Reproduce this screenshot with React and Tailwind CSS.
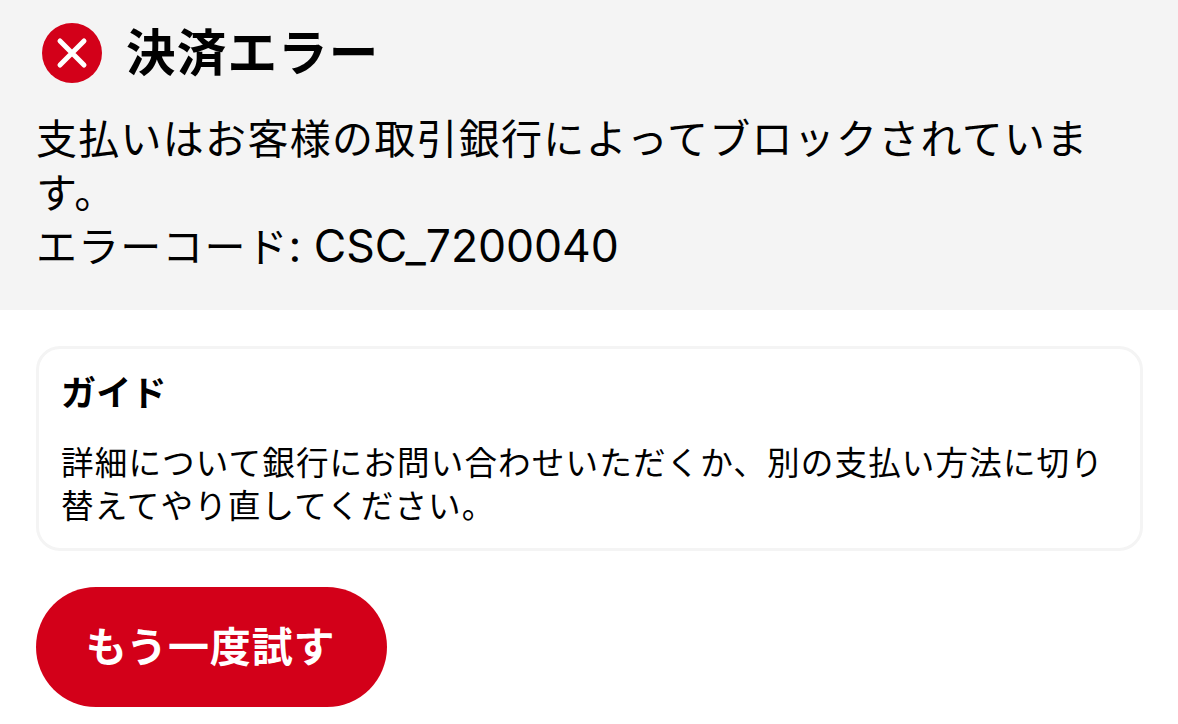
import React from "react";

function ErrorIcon() {
  return (
    <svg viewBox="0 0 60 60" className="mt-[23px] size-[60px] flex-none" aria-hidden="true">
      <circle cx="30" cy="30" r="30" fill="#d30019" />
      <path d="M18 18 42 42M42 18 18 42" stroke="#fff" strokeWidth="5" strokeLinecap="round" />
    </svg>
  );
}

export default function App() {
  return (
    <main
      lang="ja"
      className="h-[724px] overflow-hidden bg-white font-[Inter,'Noto_Sans_CJK_JP',sans-serif] text-black"
    >
      <section className="h-[310px] bg-[#f4f4f4] pl-[36px]">
        <header className="flex h-[112px] items-start gap-[24px] pl-[6px]">
          <ErrorIcon />
          <h1 className="mt-[19px] text-[49.5px] leading-[69px] font-bold tracking-[1.2px] whitespace-nowrap">
            決済エラー
          </h1>
        </header>
        <p className="text-[41px] leading-[54px] tracking-[1.28px] whitespace-nowrap">
          支払いはお客様の取引銀行によってブロックされていま
          <br />
          す。
          <br />
          <span className="tracking-[1.1px]">エラーコード</span>
          <span className="text-[44.5px] leading-[50px] tracking-[-0.05px]">: CSC_7200040</span>
        </p>
      </section>

      <section className="mr-[35px] ml-9 mt-9 h-[205px] rounded-[24px] border-[3px] border-[#f4f4f4] px-[22px] pt-[21px]">
        <h2 className="text-[35px] leading-[46px] font-bold tracking-[0.2px]">ガイド</h2>
        <p className="mt-[26px] text-[32.6px] leading-[43px] tracking-[1.12px] whitespace-nowrap">
          詳細について銀行にお問い合わせいただくか、別の支払い方法に切り
          <br />
          替えてやり直してください。
        </p>
      </section>

      <button
        type="button"
        className="mt-9 ml-9 flex h-[120px] w-[351px] items-center justify-center rounded-full bg-[#d30019] pt-[2px] pr-[2px] text-[41px] font-bold tracking-[0.8px] text-white"
      >
        もう一度試す
      </button>
    </main>
  );
}
